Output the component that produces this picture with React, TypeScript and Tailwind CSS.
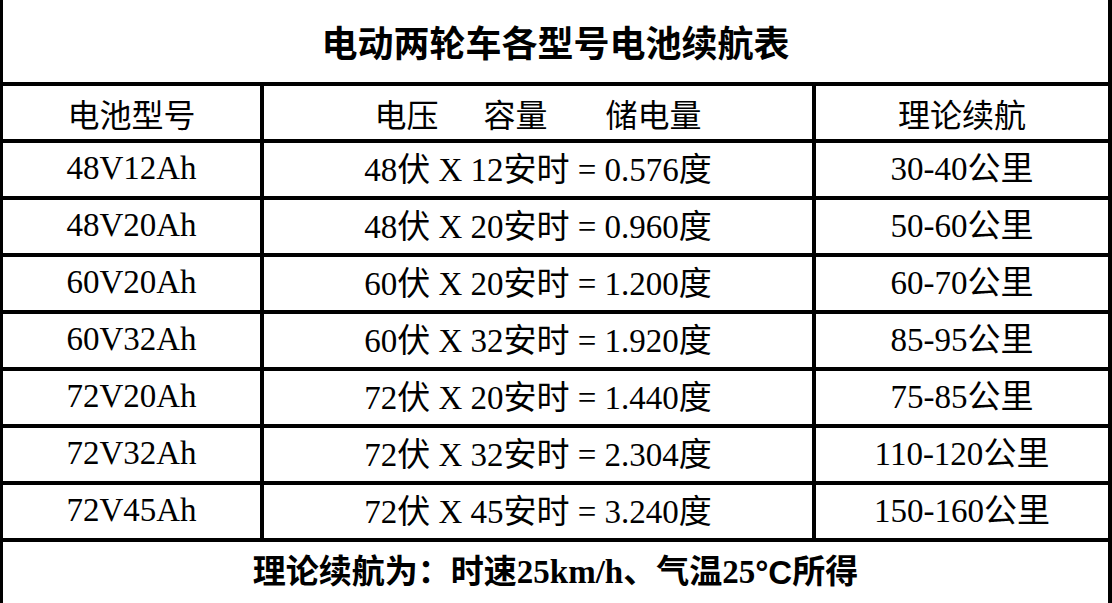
import React from "react";

const rows = [
  ["48V12Ah", "48", "12", "0.576", "30-40"],
  ["48V20Ah", "48", "20", "0.960", "50-60"],
  ["60V20Ah", "60", "20", "1.200", "60-70"],
  ["60V32Ah", "60", "32", "1.920", "85-95"],
  ["72V20Ah", "72", "20", "1.440", "75-85"],
  ["72V32Ah", "72", "32", "2.304", "110-120"],
  ["72V45Ah", "72", "45", "3.240", "150-160"],
];

const serif = { fontFamily: '"Liberation Serif", "Noto Sans CJK SC", serif' };
const sans = { fontFamily: '"Noto Sans CJK SC", "Liberation Sans", sans-serif' };

export default function App() {
  return (
    <div className="w-[1112px] h-[603px] bg-white text-black border-l-[3px] border-r-4 border-black flex flex-col overflow-hidden">
      <div className="h-[82px] flex items-center justify-center text-[36px] font-bold leading-none" style={sans}>
        电动两轮车各型号电池续航表
      </div>
      <div className="h-[57px] border-t-4 border-black flex text-[32px] leading-none" style={sans}>
        <div className="w-[261px] border-r-4 border-black flex items-center justify-center">电池型号</div>
        <div className="w-[552px] border-r-4 border-black flex items-center justify-center">
          <span>电压</span>
          <span className="ml-[45px]">容量</span>
          <span className="ml-[58px]">储电量</span>
        </div>
        <div className="flex-1 flex items-center justify-center">理论续航</div>
      </div>
      {rows.map((r) => (
        <div key={r[0]} className="h-[57px] border-t-4 border-black flex text-[33px] leading-none" style={serif}>
          <div className="w-[261px] border-r-4 border-black flex items-center justify-center pb-[3px]">{r[0]}</div>
          <div className="w-[552px] border-r-4 border-black flex items-center justify-center pt-[2px]">
            {r[1]}伏 X {r[2]}安时 = {r[3]}度
          </div>
          <div className="flex-1 flex items-center justify-center">{r[4]}公里</div>
        </div>
      ))}
      <div className="h-[65px] border-t-4 border-black flex items-center justify-center text-[33px] font-bold leading-none" style={serif}>
        理论续航为：时速25km/h、气温25<span style={{ fontFamily: '"Liberation Sans", sans-serif' }}>°C</span>所得
      </div>
    </div>
  );
}
